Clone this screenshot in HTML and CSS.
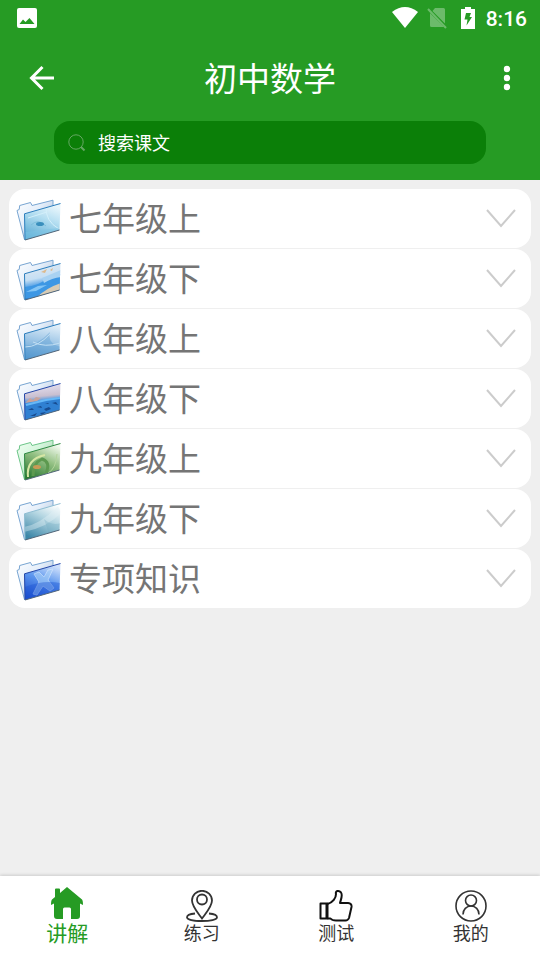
FILE: index.html
```html
<!DOCTYPE html>
<html lang="zh-CN">
<head>
	<meta charset="UTF-8">
	<meta name="viewport" content="width=device-width, initial-scale=1.0">
	<title>初中数学</title>
	<link rel="stylesheet" href="styles.css">
</head>
<body>
	<svg class="defs" aria-hidden="true">
		<defs>
			<linearGradient id="back" x1="0" y1="0" x2="1" y2="1">
				<stop offset="0" stop-color="#fff"/><stop offset=".4" stop-color="#e4eefa"/><stop offset="1" stop-color="#8fa6c4"/>
			</linearGradient>
			<linearGradient id="backGreen" x1="0" y1="0" x2="1" y2="1">
				<stop offset="0" stop-color="#f4fff4"/><stop offset=".4" stop-color="#d4f5dc"/><stop offset="1" stop-color="#8cb896"/>
			</linearGradient>
			<linearGradient id="f1" x1=".7" y1="0" x2=".3" y2="1">
				<stop offset="0" stop-color="#e9f6fc"/><stop offset=".4" stop-color="#b4def1"/><stop offset="1" stop-color="#5aabd4"/>
			</linearGradient>
			<linearGradient id="f2" x1=".3" y1="0" x2=".5" y2="1">
				<stop offset="0" stop-color="#e3eaf2"/><stop offset=".4" stop-color="#c5dff4"/><stop offset=".65" stop-color="#2f8be0"/><stop offset="1" stop-color="#2f7fc9"/>
			</linearGradient>
			<linearGradient id="f3" x1=".6" y1="0" x2=".4" y2="1">
				<stop offset="0" stop-color="#e2eff9"/><stop offset=".5" stop-color="#9cc5e6"/><stop offset="1" stop-color="#5b9bd0"/>
			</linearGradient>
			<linearGradient id="f4" x1=".4" y1="0" x2=".5" y2="1">
				<stop offset="0" stop-color="#e8e4f4"/><stop offset=".35" stop-color="#c9bfd0"/><stop offset=".5" stop-color="#3d8fe0"/><stop offset="1" stop-color="#1a5fae"/>
			</linearGradient>
			<linearGradient id="f5" x1=".8" y1="0" x2=".3" y2="1">
				<stop offset="0" stop-color="#f2faef"/><stop offset=".45" stop-color="#94c184"/><stop offset="1" stop-color="#2e7a35"/>
			</linearGradient>
			<linearGradient id="f6" x1=".8" y1="0" x2=".3" y2="1">
				<stop offset="0" stop-color="#fff"/><stop offset=".4" stop-color="#b4d6e2"/><stop offset="1" stop-color="#3d87a8"/>
			</linearGradient>
			<linearGradient id="f7" x1=".7" y1="0" x2=".3" y2="1">
				<stop offset="0" stop-color="#cfe0fb"/><stop offset=".45" stop-color="#5d97ee"/><stop offset="1" stop-color="#1c4fd0"/>
			</linearGradient>
			<clipPath id="frontClip"><path d="M8.5 15.8 44.5 5.500 43.500 32 9 42z"/></clipPath>
			<path id="backShape" d="M1 12.500 3.200 11.500 3.700 7.500 14.500 4.500 16 7.500 37 2.200V30L8.500 41.500z"/>
			<path id="frontShape" d="M8.500 15.800 44.500 5.500 43.500 32 9 42z"/>
			<path id="frontEdge" d="M44.500 5.500 8.500 15.800 9 42"/>
			<path id="frontBase" d="M9 42 43.500 32"/>
			<path id="chevron" d="M2 1 16 17 30 1"/>
		</defs>
	</svg>

	<header class="top">
		<div class="status-bar">
			<svg class="status-photo" viewBox="0 0 20 20" width="20" height="20" aria-hidden="true">
				<rect width="20" height="20" rx="2" fill="#fff"/>
				<path d="M2.500 16 6 11.500 8.500 14 12.500 10 17.500 16z" fill="#269b24"/>
			</svg>
			<svg viewBox="0 0 26 22" width="26" height="22" aria-hidden="true">
				<path d="M0 5Q13-5 26 5L13 21z" fill="#fff"/>
			</svg>
			<svg class="status-sim" viewBox="0 0 20 22" width="20" height="22" aria-hidden="true">
				<g opacity=".32"><path d="M8 1H16.500Q18 1 18 2.500V16.500L5.500 4zM3 6 17 20H4.500Q3 20 3 18.500z" fill="#fff"/>
				<path d="M1 2 19 21" stroke="#fff" stroke-width="2"/></g>
			</svg>
			<svg class="status-battery" viewBox="0 0 14 22" width="14" height="22" aria-hidden="true">
				<path d="M4 0H10V2H14V22H0V2H4z" fill="#fff"/>
				<path d="M5 6H10L8.500 10H11L5.500 18.500 6.500 12.500H3.500z" fill="#269b24"/>
			</svg>
			<span class="clock">8:16</span>
		</div>
		<div class="title-bar">
			<button class="icon-button" type="button" aria-label="返回">
				<svg viewBox="0 0 26 26" width="26" height="26"><path d="M25 13H3M13.500 2 2.500 13 13.500 24" fill="none" stroke="#fff" stroke-width="3"/></svg>
			</button>
			<h1 class="title">初中数学</h1>
			<button class="icon-button icon-button-end" type="button" aria-label="更多">
				<svg viewBox="0 0 8 26" width="8" height="26"><g fill="#fff"><circle cx="4" cy="4" r="3.200"/><circle cx="4" cy="13" r="3.200"/><circle cx="4" cy="22" r="3.200"/></g></svg>
			</button>
		</div>
		<label class="search">
			<svg viewBox="0 0 18 18" width="18" height="18" aria-hidden="true"><g fill="none" stroke="#64a862"><circle cx="8" cy="8" r="7.200"/><path d="M13 13 16.500 16.500" stroke-width="2"/></g></svg>
			<input class="search-input" type="search" placeholder="搜索课文" aria-label="搜索课文">
		</label>
	</header>

	<main class="grades">
		<button class="grade" type="button">
			<svg class="folder" viewBox="0 0 46 44" aria-hidden="true">
				<use href="#backShape" class="back"/>
				<use href="#frontShape" fill="url(#f1)"/>
				<g clip-path="url(#frontClip)" fill="none">
					<path d="M15 27Q22 20 30 28" stroke="#7dbdda"/>
					<path d="M30 8Q29 23 43 31M31 14 12 20" stroke="#d3effa"/>
					<ellipse cx="24" cy="26" rx="4" ry="2" fill="#3a8fbd"/>
					<path d="M9 34 43 30V33L9 43z" fill="#7cc4e3" opacity=".5"/>
				</g>
				<use href="#frontEdge" class="edge"/><use href="#frontBase" class="base"/>
			</svg>
			<span class="grade-name">七年级上</span>
			<svg class="chevron" viewBox="0 0 32 22" aria-hidden="true"><use href="#chevron"/></svg>
		</button>
		<button class="grade" type="button">
			<svg class="folder" viewBox="0 0 46 44" aria-hidden="true">
				<use href="#backShape" class="back"/>
				<use href="#frontShape" fill="url(#f2)"/>
				<g clip-path="url(#frontClip)">
					<path d="M9 29Q23 28 31 20L45 16V26Q30 30 22 40H8z" fill="#3d97e4"/>
					<path d="M26 20 45 12V19Q36 20 28 25z" fill="#a9d2f2"/>
					<path d="M10 34 22 28 31 27 20 33z" fill="#84c5f5"/>
					<path d="M20 40Q30 30 45 25V36z" fill="#d8cbb4"/>
					<path d="M25 14 31 11 29 15zM34 12 37 10 36 13z" fill="#dcb98c"/>
				</g>
				<use href="#frontEdge" class="edge"/><use href="#frontBase" class="base"/>
			</svg>
			<span class="grade-name">七年级下</span>
			<svg class="chevron" viewBox="0 0 32 22" aria-hidden="true"><use href="#chevron"/></svg>
		</button>
		<button class="grade" type="button">
			<svg class="folder" viewBox="0 0 46 44" aria-hidden="true">
				<use href="#backShape" class="back"/>
				<use href="#frontShape" fill="url(#f3)"/>
				<g clip-path="url(#frontClip)">
					<path d="M8 28Q21 28 34 14 31 26 45 29V36L8 43z" fill="#4c94cf" opacity=".35"/>
					<path d="M9 29Q22 29 34 16M17 24Q29 30 44 25" fill="none" stroke="#c2dff3"/>
				</g>
				<use href="#frontEdge" class="edge"/><use href="#frontBase" class="base"/>
			</svg>
			<span class="grade-name">八年级上</span>
			<svg class="chevron" viewBox="0 0 32 22" aria-hidden="true"><use href="#chevron"/></svg>
		</button>
		<button class="grade" type="button">
			<svg class="folder" viewBox="0 0 46 44" aria-hidden="true">
				<use href="#backShape" class="back"/>
				<use href="#frontShape" fill="url(#f4)"/>
				<g clip-path="url(#frontClip)">
					<path d="M9 27 45 19V34L8 44z" fill="#2f80d2"/>
					<path d="M9 25 14 20 17 22 20 19 25 20 21 23z" fill="#c9a39b"/>
					<path d="M10 27 30 22 44 20" fill="none" stroke="#66b8f7" stroke-width="2"/>
					<path d="M12 32 16 30 18 32zM21 29 25 28 26 30zM14 38 21 35 19 38zM28 31 33 29 35 31 30 33zM36 25 40 24 42 27zM24 35 30 34 26 37zM29 26 32 25 33 26z" fill="#174b8f"/>
				</g>
				<use href="#frontEdge" class="edge edge-deep"/><use href="#frontBase" class="base"/>
			</svg>
			<span class="grade-name">八年级下</span>
			<svg class="chevron" viewBox="0 0 32 22" aria-hidden="true"><use href="#chevron"/></svg>
		</button>
		<button class="grade" type="button">
			<svg class="folder" viewBox="0 0 46 44" aria-hidden="true">
				<use href="#backShape" class="back back-green"/>
				<use href="#frontShape" fill="url(#f5)"/>
				<g clip-path="url(#frontClip)" fill="none">
					<path d="M12 39Q10 21 29 17" stroke="#d6e6a4" stroke-width="2"/>
					<path d="M17 38Q17 25 26 21 35 24 30 35" stroke="#5d9950" stroke-width="3"/>
					<ellipse cx="21" cy="29" rx="4" ry="2" fill="#c89a55"/>
					<path d="M32 35Q40 31 41 16" stroke="#b3d49c"/>
				</g>
				<use href="#frontEdge" class="edge edge-green"/><use href="#frontBase" class="base"/>
			</svg>
			<span class="grade-name">九年级上</span>
			<svg class="chevron" viewBox="0 0 32 22" aria-hidden="true"><use href="#chevron"/></svg>
		</button>
		<button class="grade" type="button">
			<svg class="folder" viewBox="0 0 46 44" aria-hidden="true">
				<use href="#backShape" class="back"/>
				<use href="#frontShape" fill="url(#f6)"/>
				<g clip-path="url(#frontClip)">
					<path d="M8 29Q25 26 42 8L45 15Q32 29 8 34z" fill="#e1f1f5" opacity=".4"/>
					<path d="M28 21Q35 28 45 25V34L33 36z" fill="#6ca9bf" opacity=".3"/>
				</g>
				<use href="#frontEdge" class="edge edge-fade"/><use href="#frontBase" class="base"/>
			</svg>
			<span class="grade-name">九年级下</span>
			<svg class="chevron" viewBox="0 0 32 22" aria-hidden="true"><use href="#chevron"/></svg>
		</button>
		<button class="grade" type="button">
			<svg class="folder" viewBox="0 0 46 44" aria-hidden="true">
				<use href="#backShape" class="back"/>
				<use href="#frontShape" fill="url(#f7)"/>
				<g clip-path="url(#frontClip)">
					<path d="M18 16 23 14 28 19 32 12 37 11 32 22 38 30 34 33 27 28 21 37 17 36 23 24z" fill="#a9d0f7" opacity=".6" stroke="#dceeff"/>
					<path d="M9 29Q27 22 44 25V34L9 42z" fill="#1c53d3" opacity=".4"/>
				</g>
				<use href="#frontEdge" class="edge edge-deep"/><use href="#frontBase" class="base"/>
			</svg>
			<span class="grade-name">专项知识</span>
			<svg class="chevron" viewBox="0 0 32 22" aria-hidden="true"><use href="#chevron"/></svg>
		</button>
	</main>

	<nav class="tabs">
		<a class="tab tab-active" href="#learn" aria-current="page">
			<svg viewBox="0 0 32 32" width="32" height="32" aria-hidden="true">
				<path d="M4 10V2.500Q4 1.500 5 1.500H8Q9 1.500 9 2.500V6L16 0 31 12.500Q32 13.500 32 18L29 16.500V29Q29 32 26 32H20V22Q20 20.500 18.500 20.500H13.500Q12 20.500 12 22V32H6Q3 32 3 29V16.500L0 18Q0 13.500 1 12.500z" fill="#269b24"/>
			</svg>
			<span>讲解</span>
		</a>
		<a class="tab" href="#practice">
			<svg viewBox="0 0 32 32" width="32" height="32" aria-hidden="true">
				<g fill="none" stroke="#333" stroke-width="1.800">
					<path d="M9 23.500C4 24 1 25.500 1 27.200 1 29.700 8 31 16 31S31 29.700 31 27.200C31 25.500 28 24 23 23.500"/>
					<path d="M16 28.500C12 23 6 16.500 6 10.500A10 9.700 0 0 1 26 10.500C26 16.500 20 23 16 28.500z"/>
					<circle cx="16" cy="9.500" r="5"/>
				</g>
			</svg>
			<span>练习</span>
		</a>
		<a class="tab" href="#test">
			<svg viewBox="0 0 34 32" width="34" height="32" aria-hidden="true">
				<g fill="none" stroke="#111" stroke-width="2" stroke-linejoin="round">
					<path d="M1.500 13.500H8.500V28.500H1.500zM7.500 13.500V28.500"/>
					<path d="M8.500 14C14 12.500 17 8 17 4 16 .500 20 .200 22 2.500 24 5 22 9 21 13H29Q33 13.500 32.500 17L30 28Q29 30.500 26.500 30.500H17Q13 30.500 11.500 28.500H8.500"/>
				</g>
			</svg>
			<span>测试</span>
		</a>
		<a class="tab" href="#mine">
			<svg viewBox="0 0 32 32" width="32" height="32" aria-hidden="true">
				<g fill="none" stroke="#333" stroke-width="1.600">
					<circle cx="16" cy="16" r="15"/>
					<circle cx="16" cy="10.500" r="5.500"/>
					<path d="M8 24.500C8 19.500 11.500 16 16 16S24 19.500 24 24.500"/>
				</g>
			</svg>
			<span>我的</span>
		</a>
	</nav>
</body>
</html>
```
FILE: styles.css
```css
html, body{
	margin:0;
	height:100%;
}
*{
	box-sizing:border-box;
}
body{
	display:flex;
	flex-direction:column;
	background-color:#efefef;
	font-family:Roboto, "Noto Sans CJK SC", sans-serif;
}
button{
	border:0;
	padding:0;
	background:none;
	font:inherit;
	cursor:pointer;
}
svg{
	display:block;
	flex:none;
}
.defs{
	position:absolute;
	width:0;
	height:0;
}

.top{
	padding-bottom:16px;
	background-color:#269b24;
	color:#fff;
}
.status-bar{
	display:flex;
	align-items:center;
	height:35px;
	padding:0 13px 0 17px;
}
.status-photo{
	margin-right:auto;
}
.status-sim{
	margin-left:9px;
}
.status-battery{
	margin:0 11px 0 14px;
}
.clock{
	padding-top:2px;
	font-size:21px;
	font-weight:500;
}
.title-bar{
	display:flex;
	align-items:center;
	justify-content:space-between;
	height:86px;
	padding:0 13px;
}
.icon-button{
	display:flex;
	align-items:center;
	justify-content:center;
	width:58px;
	height:48px;
}
.icon-button-end{
	justify-content:flex-end;
	padding-right:16px;
}
.title{
	margin:0;
	padding-bottom:2px;
	font-size:33px;
	font-weight:400;
}
.search{
	display:flex;
	align-items:center;
	gap:12px;
	height:43px;
	margin:0 10%;
	padding:0 14px;
	border-radius:16px;
	background-color:#0b7f08;
}
.search-input{
	flex:1;
	min-width:0;
	padding:2px 0 0;
	border:0;
	outline:0;
	background:none;
	color:#fff;
	font:inherit;
	font-size:18px;
}
.search-input::placeholder{
	color:#fff;
	opacity:1;
}

.grades{
	display:flex;
	flex:1;
	flex-direction:column;
	gap:1px;
	padding:9px;
}
.grade{
	display:flex;
	align-items:center;
	gap:7px;
	height:59px;
	padding:2px 14px 0 7px;
	border-radius:16px;
	background-color:#fff;
	color:#757575;
	text-align:left;
}
.grade-name{
	flex:1;
	font-size:33px;
	line-height:48px;
}
.folder{
	width:46px;
	height:44px;
}
.back{
	fill:url(#back);
	stroke:#78a5d2;
}
.back-green{
	fill:url(#backGreen);
	stroke:#6cc588;
}
.edge{
	fill:none;
	stroke:#2c7ebd;
}
.edge-deep{
	stroke:#2548a8;
}
.edge-green{
	stroke:#2f8a45;
}
.edge-fade{
	stroke:#8fbdd2;
}
.base{
	fill:none;
	stroke:#54677a;
}
.chevron{
	width:32px;
	height:22px;
	fill:none;
	stroke:#ccc;
	stroke-width:2;
}

.tabs{
	display:grid;
	grid-template-columns:repeat(4, 1fr);
	height:84px;
	padding-right:2px;
	background-color:#fff;
	box-shadow:0 -1px 3px rgba(0, 0, 0, .15);
}
.tab{
	display:flex;
	flex-direction:column;
	align-items:center;
	padding-top:14px;
	color:#333;
	font-size:18px;
	line-height:24px;
	text-decoration:none;
}
.tab-active{
	padding-top:11px;
	color:#269b24;
	font-size:21px;
	line-height:30px;
}
```
